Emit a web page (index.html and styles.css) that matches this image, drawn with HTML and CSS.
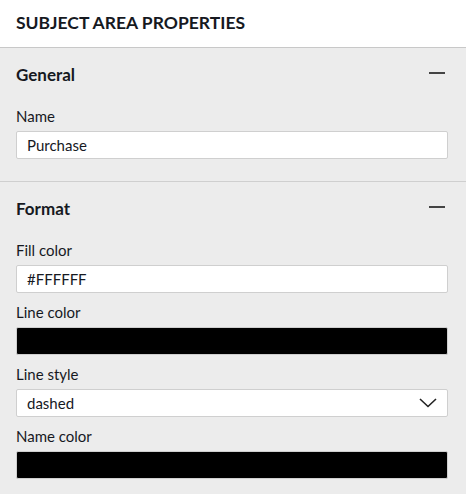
FILE: index.html
```html
<!DOCTYPE html>
<html>
<head>
<meta charset="utf-8">
<link rel="stylesheet" href="styles.css">
</head>
<body>
<div class="panel">
  <div class="header">SUBJECT AREA PROPERTIES</div>
  <div class="section">
    <div class="section-head">
      <span class="section-title">General</span>
      <span class="minus"></span>
    </div>
    <div class="field">
      <div class="label">Name</div>
      <div class="input">Purchase</div>
    </div>
  </div>
  <div class="section">
    <div class="section-head">
      <span class="section-title">Format</span>
      <span class="minus"></span>
    </div>
    <div class="field">
      <div class="label">Fill color</div>
      <div class="input">#FFFFFF</div>
    </div>
    <div class="field">
      <div class="label">Line color</div>
      <div class="input swatch"></div>
    </div>
    <div class="field">
      <div class="label">Line style</div>
      <div class="input select">
        <span>dashed</span>
        <svg class="chev" width="18" height="10" viewBox="0 0 18 10"><path d="M1 1 L9 8.5 L17 1" fill="none" stroke="#222" stroke-width="1.6"/></svg>
      </div>
    </div>
    <div class="field">
      <div class="label">Name color</div>
      <div class="input swatch"></div>
    </div>
  </div>
</div>
</body>
</html>
```
FILE: styles.css
```css
html, body {
  margin: 0;
  padding: 0;
  background: #ececec;
}
body {
  font-family: Lato, "Noto Sans", sans-serif;
  color: #16191f;
}
.panel {
  width: 466px;
  height: 494px;
  overflow: hidden;
  background: #ececec;
}
.header {
  height: 48px;
  background: #fff;
  border-bottom: 1px solid #c8c8c8;
  padding: 0 16px 3px;
  box-sizing: border-box;
  display: flex;
  align-items: center;
  font-size: 17.5px;
  font-weight: 700;
}
.section {
  padding: 0 18px 22px 16px;
  border-bottom: 1px solid #cfcfcf;
}
.section-head {
  height: 52px;
  display: flex;
  align-items: center;
  justify-content: space-between;
}
.section-title {
  font-size: 17px;
  font-weight: 700;
}
.minus {
  width: 16px;
  height: 2px;
  background: #444;
  margin-right: 3px;
  margin-top: -2px;
}
.field {
  display: flex;
  flex-direction: column;
}
.field + .field {
  margin-top: 10px;
}
.label {
  font-size: 15px;
  line-height: 18px;
  margin-bottom: 6px;
}
.section-head + .field .label {
  margin-top: 7px;
}
.input {
  height: 28px;
  box-sizing: border-box;
  background: #fff;
  border: 1px solid #cfcfcf;
  border-radius: 2px;
  display: flex;
  align-items: center;
  padding: 0 10px;
  font-size: 15px;
}
.swatch {
  background: #000;
}
.select {
  justify-content: space-between;
}
```
